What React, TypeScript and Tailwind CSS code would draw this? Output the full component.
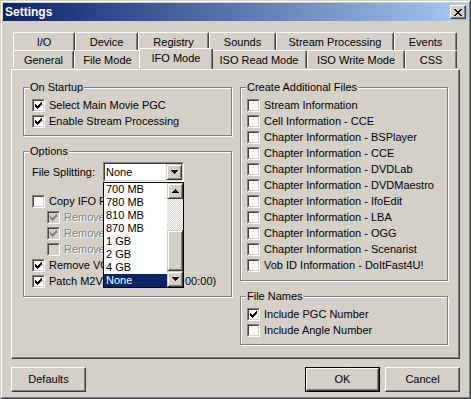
import React from "react";

// classic Win2k bevels
const RAISED =
  "border border-t-white border-l-white border-r-[#404040] border-b-[#404040] shadow-[inset_-1px_-1px_0_#808080]";
const SCROLL_BTN =
  "border border-t-[#d4d0c8] border-l-[#d4d0c8] border-r-[#404040] border-b-[#404040] shadow-[inset_1px_1px_0_#fff,inset_-1px_-1px_0_#808080] bg-[#d4d0c8]";

type TabDef = { label: string; w: string; active?: boolean };

const backRow: TabDef[] = [
  { label: "I/O", w: "w-[62px]" },
  { label: "Device", w: "w-[63px]" },
  { label: "Registry", w: "w-[71px]" },
  { label: "Sounds", w: "w-[67px]" },
  { label: "Stream Processing", w: "w-[118px]" },
  { label: "Events", w: "w-[63px]" },
];

const frontRow: TabDef[] = [
  { label: "General", w: "w-[61px]" },
  { label: "File Mode", w: "w-[67px]" },
  { label: "IFO Mode", w: "w-[74px]", active: true },
  { label: "ISO Read Mode", w: "w-[96px]" },
  { label: "ISO Write Mode", w: "w-[98px]" },
  { label: "CSS", w: "w-[52px]" },
];

const extraFiles = [
  "Stream Information",
  "Cell Information - CCE",
  "Chapter Information - BSPlayer",
  "Chapter Information - CCE",
  "Chapter Information - DVDLab",
  "Chapter Information - DVDMaestro",
  "Chapter Information - IfoEdit",
  "Chapter Information - LBA",
  "Chapter Information - OGG",
  "Chapter Information - Scenarist",
  "Vob ID Information - DoItFast4U!",
];

const sizes = ["700 MB", "780 MB", "810 MB", "870 MB", "1 GB", "2 GB", "4 GB", "None"];

function CheckGlyph({ color }: { color: string }) {
  return (
    <svg width="7" height="7" viewBox="0 0 7 7" shapeRendering="crispEdges" className="ml-[1px] mt-[1px]">
      <path
        fill={color}
        d="M6 0h1v1h-1zM5 1h2v1h-2zM0 2h1v1h-1zM4 2h3v1h-3zM0 3h2v1h-2zM3 3h3v1h-3zM0 4h5v1h-5zM1 5h3v1h-3zM2 6h1v1h-1z"
      />
    </svg>
  );
}

function Box({ checked, disabled }: { checked?: boolean; disabled?: boolean }) {
  return (
    <span className="block w-[13px] h-[13px] shrink-0 border border-t-[#808080] border-l-[#808080] border-r-white border-b-white">
      <span
        className={`block w-full h-full border border-t-[#404040] border-l-[#404040] border-r-[#d4d0c8] border-b-[#d4d0c8] ${
          disabled ? "bg-[#d4d0c8]" : "bg-white"
        }`}
      >
        {checked && <CheckGlyph color={disabled ? "#808080" : "#000"} />}
      </span>
    </span>
  );
}

function CheckRow({
  label,
  checked,
  disabled,
  className = "",
}: {
  label: React.ReactNode;
  checked?: boolean;
  disabled?: boolean;
  className?: string;
}) {
  return (
    <div className={`h-[16px] flex items-center gap-[4px] whitespace-nowrap ${className}`}>
      <Box checked={checked} disabled={disabled} />
      <span className={disabled ? "text-[#808080] [text-shadow:1px_1px_0_#fff]" : ""}>{label}</span>
    </div>
  );
}

// label text that runs under the open drop-down: only the part left of it is drawn
function Clipped({ w, children }: { w: string; children: React.ReactNode }) {
  return <span className={`block ${w} overflow-hidden`}>{children}</span>;
}

function Group({
  title,
  className,
  children,
}: {
  title: string;
  className: string;
  children: React.ReactNode;
}) {
  return (
    <div
      className={`${className} flex flex-col border border-[#808080] shadow-[inset_1px_1px_0_#fff,1px_1px_0_#fff]`}
    >
      <span className="-mt-[7px] ml-[5px] px-[1px] self-start bg-[#d4d0c8] leading-[13px]">{title}</span>
      {children}
    </div>
  );
}

function Arrow({ up }: { up?: boolean }) {
  return (
    <svg width="7" height="4" viewBox="0 0 7 4" shapeRendering="crispEdges">
      <path
        fill="#000"
        d={up ? "M3 0h1v1h1v1h1v1h1v1h-7v-1h1v-1h1v-1h1z" : "M0 0h7v1h-1v1h-1v1h-1v1h-1v-1h-1v-1h-1v-1h-1z"}
      />
    </svg>
  );
}

function Tab({ tab }: { tab: TabDef }) {
  return (
    <div
      className={`${tab.w} shrink-0 flex justify-center pt-[3px] leading-[12px] whitespace-nowrap border-t border-l border-r border-t-white border-l-white border-r-[#404040] rounded-t-[2px] shadow-[inset_-1px_0_0_#808080] bg-[#d4d0c8] ${
        tab.active ? "relative z-10 -mx-[2px] -mt-[2px] h-[21px]" : "h-[18px]"
      }`}
    >
      {tab.label}
    </div>
  );
}

function SplitCombo() {
  return (
    <div className="relative">
      <div className="w-[81px] h-[20px] border border-t-[#808080] border-l-[#808080] border-r-white border-b-white">
        <div className="h-full flex border border-t-[#404040] border-l-[#404040] border-r-[#d4d0c8] border-b-[#d4d0c8] bg-white">
          <span className="flex-1 pl-[1px] leading-[16px]">None</span>
          <span className={`w-[16px] h-full flex items-center justify-center ${SCROLL_BTN}`}>
            <Arrow />
          </span>
        </div>
      </div>

      {/* open drop-down list */}
      <div className="absolute left-0 top-full z-20 w-[81px] h-[106px] flex border border-black bg-white">
        <div className="flex-1 flex flex-col">
          {sizes.map((s, i) => (
            <div
              key={s}
              className={`h-[13px] leading-[13px] pl-[2px] ${
                i === sizes.length - 1 ? "bg-[#0a246a] text-white" : ""
              }`}
            >
              {s}
            </div>
          ))}
        </div>
        <div className="w-[16px] flex flex-col">
          <div className={`h-[16px] flex items-center justify-center ${SCROLL_BTN}`}>
            <Arrow up />
          </div>
          <div className="h-[31px] bg-[repeating-conic-gradient(#d4d0c8_0%_25%,#fff_0%_50%)] bg-[length:2px_2px]" />
          <div className={`h-[41px] ${SCROLL_BTN}`} />
          <div className={`h-[16px] flex items-center justify-center ${SCROLL_BTN}`}>
            <Arrow />
          </div>
        </div>
      </div>
    </div>
  );
}

export default function App() {
  return (
    <div className="w-[471px] h-[399px] bg-[#d4d0c8] text-black text-[11px] font-['Liberation_Sans',Arial,sans-serif] border border-t-[#d4d0c8] border-l-[#d4d0c8] border-r-[#404040] border-b-[#404040] select-none">
      <div className="h-full flex flex-col p-[1px] border border-t-white border-l-white border-r-[#808080] border-b-[#808080]">
        {/* title bar */}
        <div className="h-[18px] shrink-0 flex items-center justify-between pl-[2px] pr-[2px] bg-[linear-gradient(to_right,#0a246a,#a6caf0)]">
          <span className="text-white font-bold text-[12px] leading-[18px]">Settings</span>
          <span className={`w-[16px] h-[14px] flex items-center justify-center bg-[#d4d0c8] ${RAISED}`}>
            <svg width="8" height="7" viewBox="0 0 8 7" shapeRendering="crispEdges">
              <path
                fill="#000"
                d="M0 0h2v1h-2zM6 0h2v1h-2zM1 1h2v1h-2zM5 1h2v1h-2zM2 2h4v1h-4zM3 3h2v1h-2zM2 4h4v1h-4zM1 5h2v1h-2zM5 5h2v1h-2zM0 6h2v1h-2zM6 6h2v1h-2z"
              />
            </svg>
          </span>
        </div>

        {/* tabs */}
        <div className="pt-[11px] pl-[10px] flex flex-col">
          <div className="flex">
            {backRow.map((t) => (
              <Tab key={t.label} tab={t} />
            ))}
          </div>
          <div className="flex">
            {frontRow.map((t) => (
              <Tab key={t.label} tab={t} />
            ))}
          </div>
        </div>

        {/* tab page */}
        <div className="ml-[8px] w-[449px] h-[290px] shrink-0 flex gap-[8px] pt-[17px] px-[11px] border border-t-white border-l-white border-r-[#404040] border-b-[#404040] shadow-[inset_-1px_-1px_0_#808080]">
          <div className="w-[209px] flex flex-col">
            <Group title="On Startup" className="h-[49px]">
              <div className="mt-[3px] pl-[8px]">
                <CheckRow label="Select Main Movie PGC" checked />
                <CheckRow label="Enable Stream Processing" checked />
              </div>
            </Group>

            <Group title="Options" className="mt-[15px] h-[146px]">
              <div className="mt-[4px] pl-[8px] flex items-center">
                <span className="w-[71px]">File Splitting:</span>
                <SplitCombo />
              </div>
              <div className="mt-[11px] pl-[8px]">
                <CheckRow label={<Clipped w="w-[54px]">Copy IFO Files</Clipped>} />
                <CheckRow label={<Clipped w="w-[39px]">Remove PUOs</Clipped>} checked disabled className="pl-[15px]" />
                <CheckRow label={<Clipped w="w-[39px]">Remove Macrovision</Clipped>} checked disabled className="pl-[15px]" />
                <CheckRow label={<Clipped w="w-[39px]">Remove Region</Clipped>} disabled className="pl-[15px]" />
                <CheckRow label={<Clipped w="w-[54px]">Remove VOB Cells</Clipped>} checked />
                <CheckRow
                  label={
                    <span className="flex">
                      <Clipped w="w-[54px]">Patch M2V Timecode</Clipped>
                      <span className="ml-[82px]">00:00)</span>
                    </span>
                  }
                  checked
                />
              </div>
            </Group>
          </div>

          <div className="w-[208px] flex flex-col">
            <Group title="Create Additional Files" className="h-[194px]">
              <div className="mt-[3px] pl-[6px]">
                {extraFiles.map((f) => (
                  <CheckRow key={f} label={f} />
                ))}
              </div>
            </Group>

            <Group title="File Names" className="mt-[15px] h-[49px]">
              <div className="mt-[3px] pl-[6px]">
                <CheckRow label="Include PGC Number" checked />
                <CheckRow label="Include Angle Number" />
              </div>
            </Group>
          </div>
        </div>

        {/* dialog buttons */}
        <div className="mt-[8px] ml-[8px] w-[449px] flex">
          <button className={`w-[75px] h-[25px] bg-[#d4d0c8] ${RAISED}`}>Defaults</button>
          <div className="ml-auto w-[75px] h-[25px] border border-black">
            <button className={`w-full h-full bg-[#d4d0c8] ${RAISED}`}>OK</button>
          </div>
          <button className={`ml-[5px] w-[75px] h-[25px] bg-[#d4d0c8] ${RAISED}`}>Cancel</button>
        </div>
      </div>
    </div>
  );
}
